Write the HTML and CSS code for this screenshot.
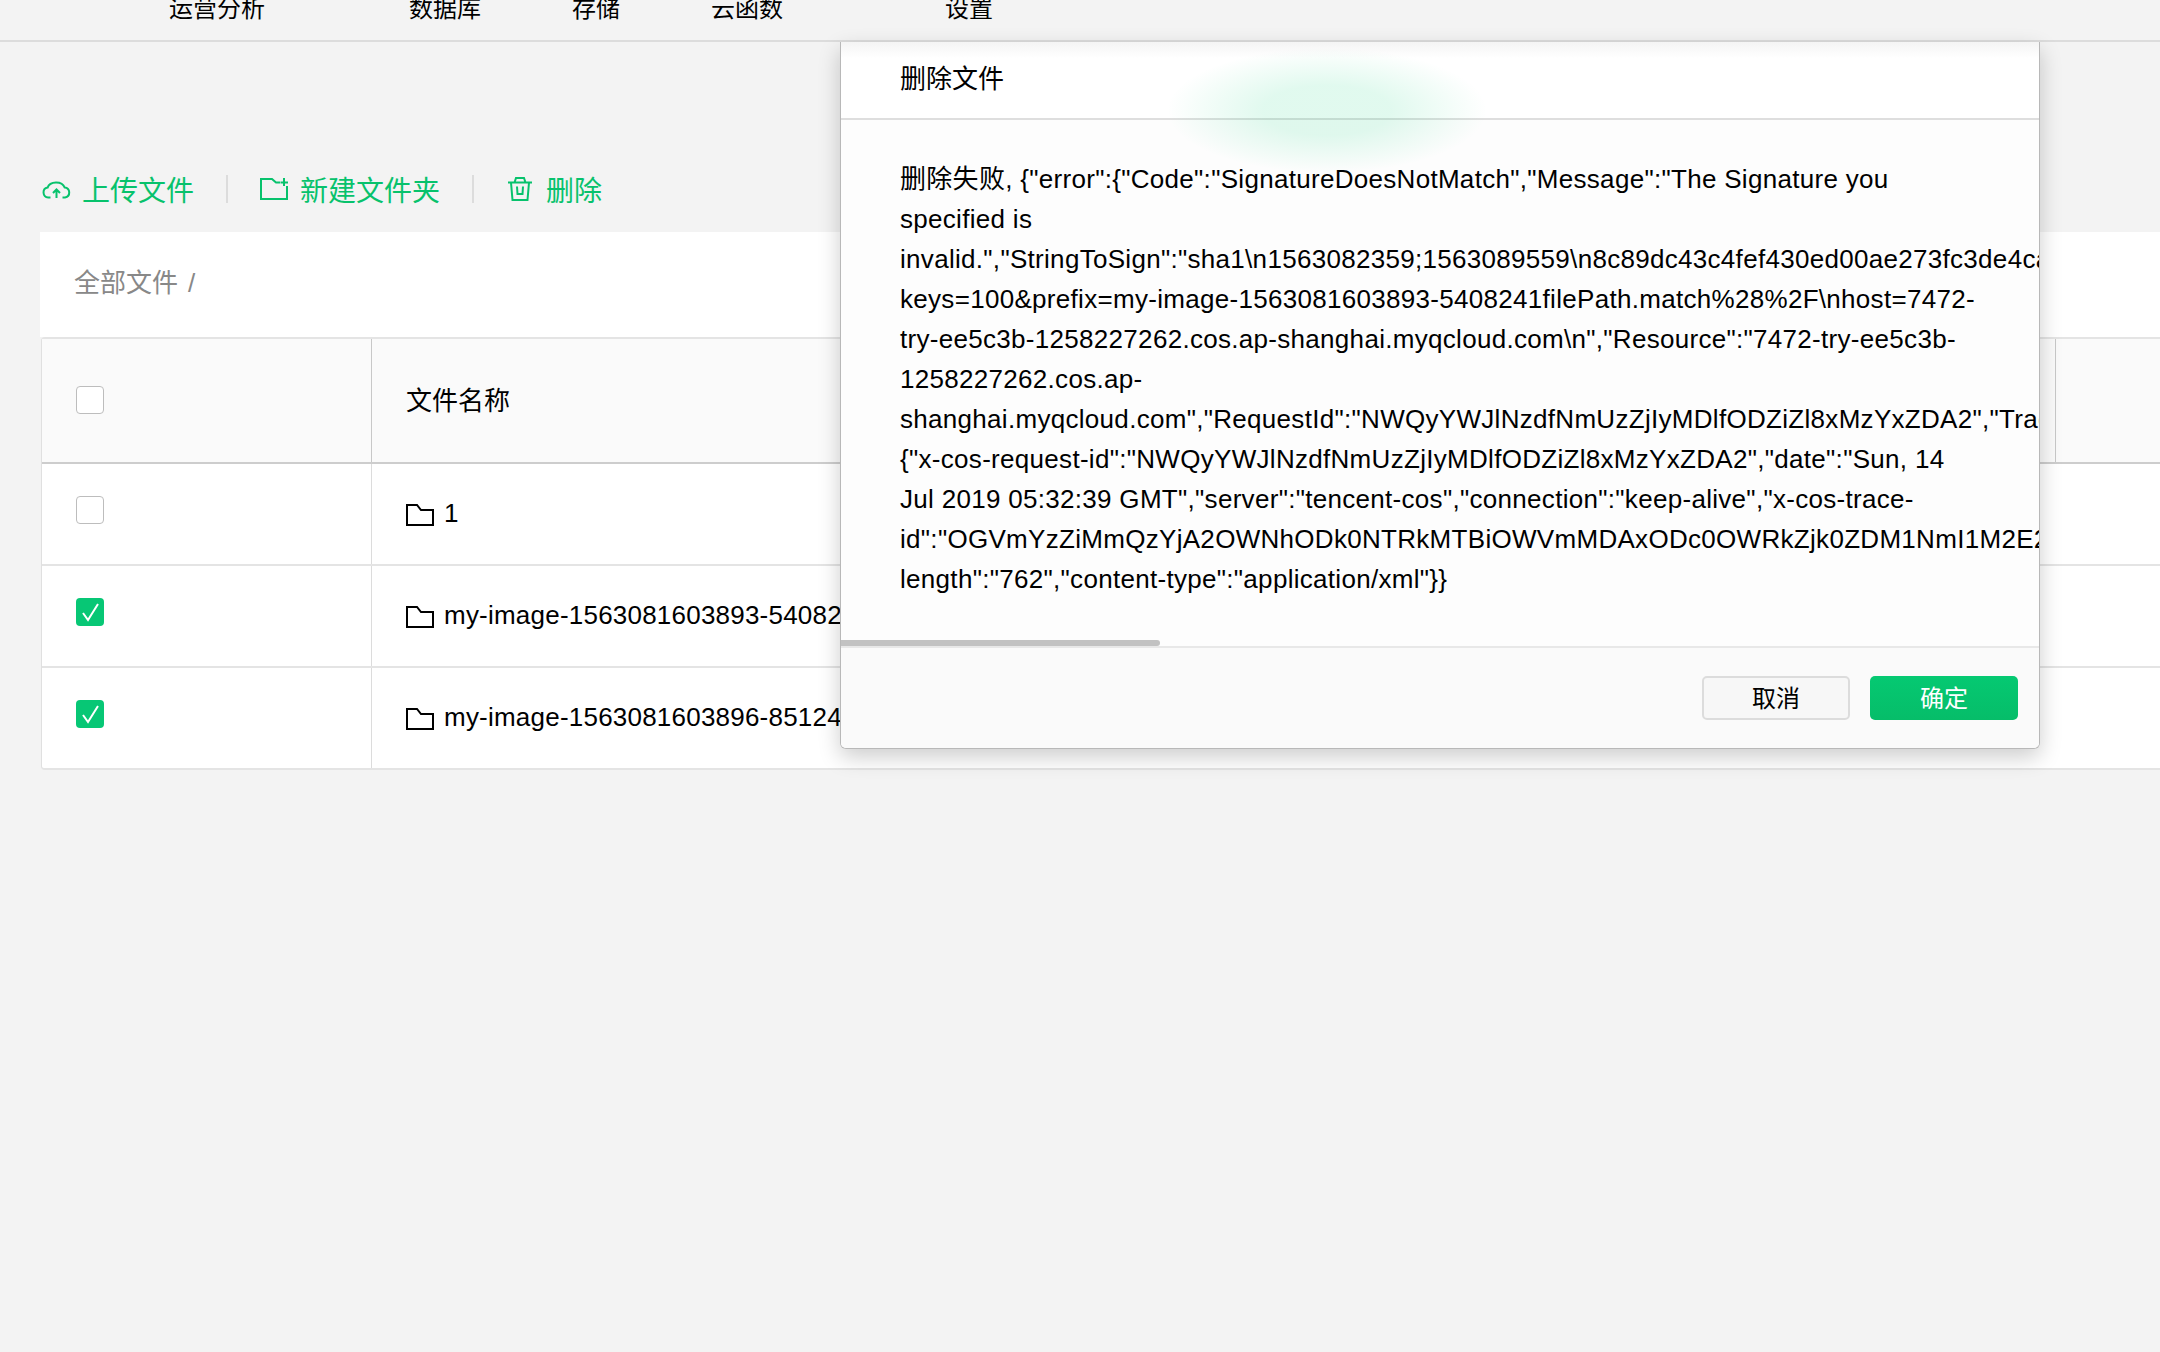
FILE: index.html
```html
<!DOCTYPE html>
<html lang="zh-CN">
<head>
  <meta charset="UTF-8" />
  <title>存储</title>
  <link rel="stylesheet" href="styles.css">
</head>
<body>
  <header class="topbar">
    <nav class="nav">
      <span class="nav-item nav-analytics">运营分析</span>
      <span class="nav-item">数据库</span>
      <span class="nav-item">存储</span>
      <span class="nav-item nav-functions">云函数</span>
      <span class="nav-item">设置</span>
    </nav>
  </header>

  <main class="content">
    <div class="toolbar">
      <a class="tool tool-upload">
        <svg class="icon" width="29" height="19" viewBox="0 0 29 19"><path d="M8.5 17.500H6.200A5 5 0 0 1 5.600 7.600 8.800 6.800 0 0 1 22.600 7.400 5.100 5.100 0 0 1 23 17.500H20.500"/><path d="M14.500 18V10M11 13l3.500-3.500L18 13"/></svg>
        上传文件
      </a>
      <span class="tool-sep"></span>
      <a class="tool tool-folder">
        <svg class="icon" width="28" height="22" viewBox="0 0 28 22"><path d="M20 4.500H16L12 1H1V21H27V8"/><path d="M20.500 4.500H28M24 0V8"/></svg>
        新建文件夹
      </a>
      <span class="tool-sep tool-sep-last"></span>
      <a class="tool tool-delete">
        <svg class="icon" width="24" height="24" viewBox="0 0 24 24"><path d="M0 5.500H24M6.500 5.500L8 1H16L17.500 5.500"/><path d="M3 5.500L4.500 23H19.500L21 5.500"/><path d="M9 9.500L9.500 17H14.500L15 9.500"/></svg>
        删除
      </a>
    </div>

    <div class="crumb">全部文件<span class="crumb-sep">/</span></div>

    <div class="file-table">
      <div class="row row-head">
        <div class="cell cell-check"><span class="check"></span></div>
        <div class="cell cell-name">文件名称</div>
        <div class="cell"></div>
      </div>
      <div class="row">
        <div class="cell cell-check"><span class="check"></span></div>
        <div class="cell cell-name">
          <svg class="folder" width="28" height="22" viewBox="0 0 28 22"><path d="M1 1H11L15 6H27V21H1Z"/></svg>
          1
        </div>
        <div class="cell"></div>
      </div>
      <div class="row">
        <div class="cell cell-check">
          <span class="check checked"><svg width="28" height="28" viewBox="0 0 28 28"><path d="M7 15l5 7L22 6"/></svg></span>
        </div>
        <div class="cell cell-name">
          <svg class="folder" width="28" height="22" viewBox="0 0 28 22"><path d="M1 1H11L15 6H27V21H1Z"/></svg>
          my-image-1563081603893-5408241
        </div>
        <div class="cell"></div>
      </div>
      <div class="row">
        <div class="cell cell-check">
          <span class="check checked"><svg width="28" height="28" viewBox="0 0 28 28"><path d="M7 15l5 7L22 6"/></svg></span>
        </div>
        <div class="cell cell-name">
          <svg class="folder" width="28" height="22" viewBox="0 0 28 22"><path d="M1 1H11L15 6H27V21H1Z"/></svg>
          my-image-1563081603896-8512467
        </div>
        <div class="cell"></div>
      </div>
    </div>
  </main>

  <div class="modal">
    <div class="modal-glow"></div>
    <div class="modal-title">删除文件</div>
    <div class="modal-body">
      <p class="modal-msg">删除失败, {"error":{"Code":"SignatureDoesNotMatch","Message":"The Signature you<br>
specified is<br>
invalid.","StringToSign":"sha1\n1563082359;1563089559\n8c89dc43c4fef430ed00ae273fc3de4ca1b6f2\n"<br>
keys=100&amp;prefix=my-image-1563081603893-5408241filePath.match%28%2F\nhost=7472-<br>
try-ee5c3b-1258227262.cos.ap-shanghai.myqcloud.com\n","Resource":"7472-try-ee5c3b-<br>
1258227262.cos.ap-<br>
shanghai.myqcloud.com","RequestId":"NWQyYWJlNzdfNmUzZjIyMDlfODZiZl8xMzYxZDA2","TraceId":<br>
{"x-cos-request-id":"NWQyYWJlNzdfNmUzZjIyMDlfODZiZl8xMzYxZDA2","date":"Sun, 14<br>
Jul 2019 05:32:39 GMT","server":"tencent-cos","connection":"keep-alive","x-cos-trace-<br>
id":"OGVmYzZiMmQzYjA2OWNhODk0NTRkMTBiOWVmMDAxODc0OWRkZjk0ZDM1NmI1M2E2MzY","content-<br>
length":"762","content-type":"application/xml"}}</p>
      <div class="modal-scroll"></div>
    </div>
    <div class="modal-foot">
      <button class="btn">取消</button>
      <button class="btn btn-primary">确定</button>
    </div>
  </div>
</body>
</html>
```

FILE: styles.css
```css
html, body {
  margin: 0;
  padding: 0;
  height: 100%;
}
body {
  position: relative;
  height: 1352px;
  overflow: hidden;
  background: #f3f3f3;
  color: #000;
  font-family: "Liberation Sans", "Noto Sans CJK SC", sans-serif;
  font-size: 26px;
}

/* top nav, scrolled partly out of view */
.topbar {
  height: 40px;
  border-bottom: 2px solid #dcdcdc;
  overflow: hidden;
}
.nav {
  display: flex;
  gap: 91px;
  padding-left: 169px;
  font-size: 24px;
  line-height: 18px;
}
.nav-analytics { margin-right: 53px; }
.nav-functions { margin-right: 71px; }

.content {
  padding-left: 40px;
}

.toolbar {
  display: flex;
  align-items: center;
  height: 28px;
  margin-top: 133px;
  margin-bottom: 29px;
  padding-left: 2px;
  color: #07c26c;
  font-size: 28px;
}
.tool {
  display: flex;
  align-items: center;
  gap: 11px;
}
.tool-folder { gap: 12px; }
.tool-delete {
  gap: 14px;
  margin-left: 2px;
}
.tool-sep {
  width: 2px;
  height: 28px;
  margin: 0 32px;
  background: #dcdcdc;
}
.icon {
  fill: none;
  stroke: #07c26c;
  stroke-width: 2;
}

.crumb {
  height: 105px;
  padding-left: 34px;
  background: #fff;
  color: #888;
  line-height: 102px;
}
.crumb-sep { margin-left: 10px; }

.file-table {
  margin-left: 1px;
  border-top: 2px solid #e4e4e4;
  border-left: 1px solid #e0e0e0;
  border-bottom: 2px solid #e4e4e4;
  border-radius: 4px 0 0 4px;
  background: #fff;
}
.row {
  display: grid;
  grid-template-columns: 330px 1684px 1fr;
  height: 100px;
  border-bottom: 2px solid #e4e4e4;
}
.row:last-child { border-bottom: 0; }
.row-head {
  height: 123px;
  border-bottom: 2px solid #cdcdcd;
  background: #fafafa;
}
.cell {
  display: flex;
  align-items: center;
}
.cell-check {
  align-items: flex-start;
  padding: 32px 0 0 34px;
  border-right: 1px solid #dcdcdc;
}
.cell-name {
  gap: 10px;
  padding: 0 0 2px 34px;
  letter-spacing: 0.22px;
  white-space: nowrap;
  overflow: hidden;
}
.row-head .cell-check {
  padding-top: 47px;
  border-right-color: #c8c8c8;
}
.row-head .cell-name {
  padding-bottom: 5px;
  border-right: 1px solid #c8c8c8;
  letter-spacing: 0;
}
.folder {
  flex: none;
  margin-top: 4px;
  fill: none;
  stroke: #000;
  stroke-width: 2;
}
.check {
  display: block;
  box-sizing: border-box;
  width: 28px;
  height: 28px;
  border: 1px solid #bdbdbd;
  border-radius: 4px;
  background: #fff;
}
.checked {
  border: 0;
  background: #07c775;
}
.checked svg {
  display: block;
  fill: none;
  stroke: #fff;
  stroke-width: 2;
}

/* dialog */
.modal {
  position: absolute;
  top: 42px;
  left: 840px;
  width: 1198px;
  border: 1px solid #b8b8b8;
  border-top: 0;
  border-radius: 0 0 6px 6px;
  background: #fff;
  box-shadow: 0 8px 22px rgba(0, 0, 0, 0.2);
  overflow: hidden;
}
.modal-glow {
  position: absolute;
  top: 6px;
  left: 326px;
  width: 320px;
  height: 125px;
  background: radial-gradient(closest-side, rgba(7, 210, 120, 0.12) 40%, rgba(7, 210, 120, 0));
}
.modal-title {
  height: 76px;
  padding-left: 59px;
  border-bottom: 2px solid #dedede;
  background: linear-gradient(#f4f4f4, #fff 16px);
  line-height: 74px;
}
.modal-body {
  background: #fdfdfd;
}
.modal-msg {
  margin: 0;
  padding: 39px 0 0 59px;
  line-height: 40px;
  letter-spacing: 0.3px;
  white-space: nowrap;
  overflow: hidden;
}
.modal-scroll {
  width: 319px;
  height: 6px;
  margin-top: 41px;
  border-radius: 0 3px 3px 0;
  background: #c2c2c2;
}
.modal-foot {
  display: flex;
  justify-content: flex-end;
  gap: 20px;
  height: 72px;
  padding: 28px 21px 0 0;
  border-top: 2px solid #e8e8e8;
  background: #fafafa;
}
.btn {
  box-sizing: border-box;
  width: 148px;
  height: 44px;
  padding: 0 0 3px;
  border: 2px solid #dcdcdc;
  border-radius: 5px;
  background: #f7f7f7;
  color: #000;
  font-family: inherit;
  font-size: 24px;
}
.btn-primary {
  border: 0;
  background: linear-gradient(#05c972, #06bd69);
  color: #fff;
}
```
